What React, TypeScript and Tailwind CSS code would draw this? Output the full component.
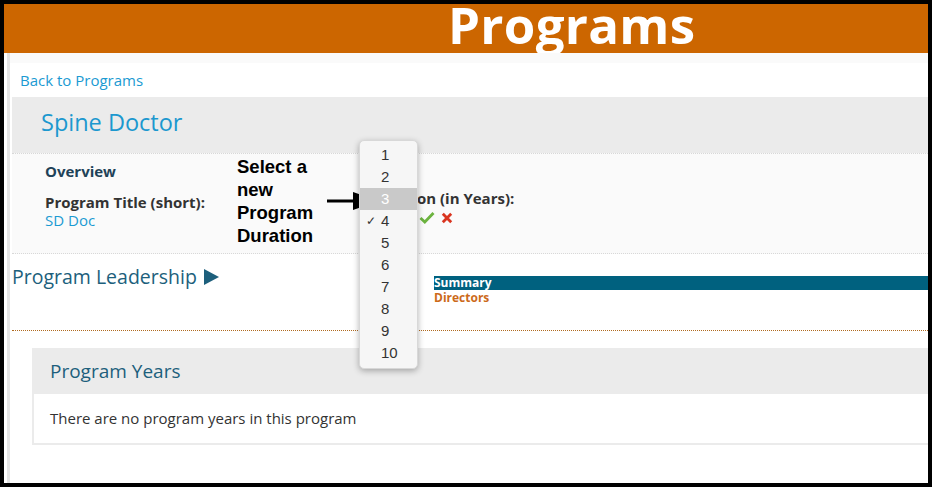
import React from "react";

const nun = { fontFamily: "'Open Sans', 'Noto Sans', sans-serif" };

export default function App() {
  const items = ["1", "2", "3", "4", "5", "6", "7", "8", "9", "10"];
  return (
    <div className="w-[932px] h-[487px] bg-black p-[4px] overflow-hidden" style={nun}>
      <div className="relative w-full h-full bg-white flex flex-col overflow-hidden">
        {/* Header */}
        <div className="h-[49px] shrink-0 bg-[#cc6600] overflow-hidden pl-[444px]">
          <div className="text-white font-bold text-[51px] leading-[50px] -mt-[5px] tracking-[0.3px]">Programs</div>
        </div>
        {/* Body */}
        <div className="flex flex-1 min-h-0">
          <div className="w-[3px] bg-white shrink-0" />
          <div className="w-[3px] bg-[#e4e4e4] shrink-0" />
          <div className="flex-1 min-w-0 flex flex-col pl-[2px]">
            <div className="h-[10px] bg-[#fafafa] -ml-[2px]" />
            <div className="h-[34px] flex items-center pl-[8px] text-[15px] text-[#1b9ad2]">Back to Programs</div>
            {/* Spine doctor box */}
            <div className="h-[56px] bg-[#ebebeb] flex items-center pl-[29px] pb-[4px] text-[23.5px] text-[#1c98cf]">Spine Doctor</div>
            {/* Overview */}
            <div className="h-[101px] bg-[#fafafa] border-t border-b border-dotted border-[#d8d8d8] flex pl-[33px] pt-[7px] text-[15px]">
              <div className="w-[324px] shrink-0">
                <div className="font-bold text-[#1e4258] h-[20px] leading-[20px]">Overview</div>
                <div className="font-bold text-[#333] mt-[12px] leading-[18px]">Program Title (short):</div>
                <div className="text-[#1b9ad2] leading-[18px]">SD Doc</div>
              </div>
              <div className="pt-[28px]">
                <div className="font-bold text-[#333] leading-[18px] whitespace-nowrap">Duration (in Years):</div>
                <div className="flex items-center gap-[6px] mt-[4px] pl-[50px]">
                  <svg width="16" height="13" viewBox="0 0 16 13">
                    <path d="M1.5 7 L5.8 11 L14.5 2" stroke="#6cb33f" strokeWidth="2.8" fill="none" />
                  </svg>
                  <svg width="12" height="12" viewBox="0 0 12 12">
                    <path d="M1.8 1.8 L10.2 10.2 M10.2 1.8 L1.8 10.2" stroke="#d9341f" strokeWidth="2.8" fill="none" />
                  </svg>
                </div>
              </div>
            </div>
            {/* Program Leadership */}
            <div className="h-[76px] flex">
              <div className="w-[422px] shrink-0 pt-[12px] flex items-start">
                <div className="flex items-center text-[19.5px] text-[#1d5f7c] leading-[22px]">
                  <span>Program Leadership</span>
                  <svg className="ml-[7px]" width="15" height="16" viewBox="0 0 15 16">
                    <path d="M0 0 L15 8 L0 16 Z" fill="#1d5f7c" />
                  </svg>
                </div>
              </div>
              <div className="flex-1 pt-[22px]">
                <div className="h-[14px] bg-[#00617f] text-white font-bold text-[12px] leading-[14px]">Summary</div>
                <div className="text-[#cc6a1a] font-bold text-[12px] leading-[14px] mt-[1px]">Directors</div>
              </div>
            </div>
            <div className="border-t border-dotted border-[#b06a20]" />
            {/* Program Years */}
            <div className="pl-[20px] pt-[17px]">
              <div className="border-2 border-t-0 border-[#ebebeb] border-r-0">
                <div className="h-[46px] bg-[#ebebeb] flex items-center pl-[16px] text-[19px] text-[#1d5f7c] -ml-[2px] pl-[18px]">Program Years</div>
                <div className="h-[49px] flex items-center pl-[16px] text-[15px] text-[#333]">There are no program years in this program</div>
              </div>
            </div>
          </div>
        </div>

        {/* Annotation */}
        <div className="absolute left-[227px] top-[151px] pl-[6px] text-[18.5px] font-bold text-black leading-[23px]" style={{ fontFamily: "'Liberation Sans', Arial, sans-serif" }}>
          <div>Select a</div>
          <div>new</div>
          <div>Program</div>
          <div>Duration</div>
        </div>
        {/* Arrow */}
        <svg className="absolute left-[323px] top-[187px]" width="52" height="20" viewBox="0 0 52 20">
          <path d="M0 10 H28" stroke="black" strokeWidth="3" />
          <path d="M26 1 L52 10 L26 19 Z" fill="black" />
        </svg>

        {/* Dropdown */}
        <div className="absolute left-[355px] top-[136px] w-[59px] h-[229px] bg-[#f6f6f6] rounded-[5px] shadow-[0_2px_6px_rgba(0,0,0,0.3)] border border-[#d8d8d8] pt-[3px]" style={{ fontFamily: "'Liberation Sans', Arial, sans-serif" }}>
          {items.map((n) => (
            <div
              key={n}
              className={
                n === "3"
                  ? "relative h-[22px] leading-[22px] text-[15px] pl-[21px] bg-[#c9c9c9] text-white"
                  : "relative h-[22px] leading-[22px] text-[15px] pl-[21px] text-[#333]"
              }
            >
              {n === "4" && <span className="absolute left-[6px] top-0 text-[12px] text-[#333]">✓</span>}
              {n}
            </div>
          ))}
        </div>
      </div>
    </div>
  );
}
